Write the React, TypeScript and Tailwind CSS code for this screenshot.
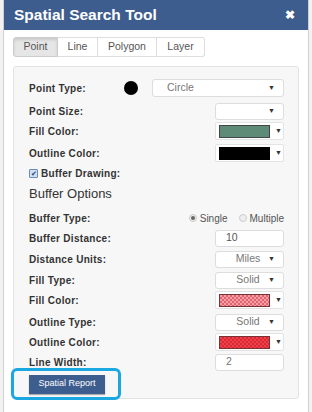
import React from "react";

const font = { fontFamily: "'Liberation Sans', Arial, sans-serif" };

function Caret({ className = "" }: { className?: string }) {
  return <span className={`text-[7px] text-[#333] ${className}`}>▼</span>;
}

function Select({ value, className = "", left = false }: { value?: string; className?: string; left?: boolean }) {
  return (
    <div
      className={`h-[17px] bg-white border border-[#ddd] rounded-[3px] flex items-center justify-between pl-3 pr-2 text-[10.5px] text-[#777] ${className}`}
    >
      <span className={`flex-1 ${left ? "text-left pl-[2px]" : "text-center"}`}>{value}</span>
      <Caret />
    </div>
  );
}

function Swatch({ swatch }: { swatch: React.ReactNode }) {
  return (
    <div className="w-[69px] h-[18px] bg-white border border-[#e3e3e3] rounded-[2px] flex items-center pl-[3px] gap-[5px]">
      {swatch}
      <Caret />
    </div>
  );
}

function Row({ label, children }: { label: string; children?: React.ReactNode }) {
  return (
    <div className="flex items-center justify-between h-[20px]">
      <span className="text-[10px] font-bold text-[#333] tracking-[0.3px]">{label}</span>
      {children}
    </div>
  );
}

const checker = {
  backgroundColor: "#f4a0a6",
  backgroundImage:
    "linear-gradient(45deg,#e06470 25%,transparent 25%,transparent 75%,#e06470 75%),linear-gradient(45deg,#e06470 25%,transparent 25%,transparent 75%,#e06470 75%)",
  backgroundSize: "4px 4px",
  backgroundPosition: "0 0,2px 2px",
};

const checkerRed = {
  backgroundColor: "#f0404a",
  backgroundImage:
    "linear-gradient(45deg,#d82a34 25%,transparent 25%,transparent 75%,#d82a34 75%),linear-gradient(45deg,#d82a34 25%,transparent 25%,transparent 75%,#d82a34 75%)",
  backgroundSize: "4px 4px",
  backgroundPosition: "0 0,2px 2px",
};

export default function App() {
  return (
    <div className="w-[312px] h-[412px] bg-[#f2f2f2] overflow-hidden" style={font}>
      <div className="mx-[3px] h-[412px] bg-white border-x border-[#d0d0d0] flex flex-col">
        {/* Header */}
        <div className="h-[30px] bg-[#3d5d8f] flex items-center justify-between pl-[10px] pr-[13px] shrink-0">
          <span className="text-white font-bold text-[15.5px]">Spatial Search Tool</span>
          <span className="text-white font-bold text-[12px] leading-none">✖</span>
        </div>

        {/* Tabs */}
        <div className="flex mt-[7px] ml-[9px] text-[10.5px] text-[#555]">
          <div className="h-[20px] w-[45px] flex items-center justify-center bg-[#e6e6e6] border border-[#ccc] rounded-l-[3px] shadow-[inset_0_2px_3px_rgba(0,0,0,0.12)]">
            Point
          </div>
          <div className="h-[20px] w-[40px] flex items-center justify-center border-y border-r border-[#ddd]">Line</div>
          <div className="h-[20px] w-[59px] flex items-center justify-center border-y border-r border-[#ddd]">Polygon</div>
          <div className="h-[20px] w-[48px] flex items-center justify-center border-y border-r border-[#ddd] rounded-r-[3px]">Layer</div>
        </div>

        {/* Panel */}
        <div className="mt-[9px] mx-[9px] h-[333px] bg-[#f7f7f7] border border-[#e3e3e3] rounded-[3px] pl-[15px] pr-[14px] pt-[11px]">
          <Row label="Point Type:">
            <div className="flex items-center gap-[14px]">
              <span className="w-[14px] h-[14px] rounded-full bg-black" />
              <Select value="Circle" left className="w-[132px] h-[18px]" />
            </div>
          </Row>
          <div className="h-[3px]" />
          <Row label="Point Size:">
            <Select className="w-[69px]" />
          </Row>
          <Row label="Fill Color:">
            <Swatch swatch={<span className="w-[51px] h-[13px] bg-[#5e8a78] border border-[#444]" />} />
          </Row>
          <div className="h-[2px]" />
          <Row label="Outline Color:">
            <Swatch swatch={<span className="w-[51px] h-[13px] bg-black" />} />
          </Row>
          <div className="flex items-center gap-[3px] h-[20px]">
            <span className="w-[9px] h-[9px] bg-[#cfe0f5] border border-[#6b8cba] rounded-[1px] flex items-center justify-center text-[7px] leading-none text-[#1f3e6e]">
              ✔
            </span>
            <span className="text-[10px] font-bold text-[#333] tracking-[0.3px]">Buffer Drawing:</span>
          </div>
          <div className="h-[22px] flex items-center text-[13px] text-[#333]">Buffer Options</div>
          <div className="h-[3px]" />
          <Row label="Buffer Type:">
            <div className="flex items-center text-[10px] text-[#555] gap-[3px]">
              <span className="w-[8px] h-[8px] rounded-full bg-[#eee] border border-[#ccc] flex items-center justify-center">
                <span className="w-[4px] h-[4px] rounded-full bg-[#666]" />
              </span>
              <span>Single</span>
              <span className="ml-[8px] w-[8px] h-[8px] rounded-full bg-[#eee] border border-[#ccc]" />
              <span>Multiple</span>
            </div>
          </Row>
          <Row label="Buffer Distance:">
            <div className="w-[69px] h-[17px] bg-white border border-[#ddd] rounded-[3px] text-[10.5px] text-[#555] pl-[10px] flex items-center">10</div>
          </Row>
          <div className="h-[1px]" />
          <Row label="Distance Units:">
            <Select value="Miles" className="w-[69px]" />
          </Row>
          <div className="h-[1px]" />
          <Row label="Fill Type:">
            <Select value="Solid" className="w-[69px]" />
          </Row>
          <Row label="Fill Color:">
            <Swatch swatch={<span className="w-[51px] h-[13px] border border-[#733]" style={checker} />} />
          </Row>
          <div className="h-[2px]" />
          <Row label="Outline Type:">
            <Select value="Solid" className="w-[69px]" />
          </Row>
          <Row label="Outline Color:">
            <Swatch swatch={<span className="w-[51px] h-[13px] border border-[#733]" style={checkerRed} />} />
          </Row>
          <Row label="Line Width:">
            <div className="w-[69px] h-[17px] bg-white border border-[#ddd] rounded-[3px] text-[10.5px] text-[#777] pl-[10px] flex items-center">2</div>
          </Row>
          <div className="-mt-[4px] -ml-[18px] w-[110px] h-[32px] border-[3px] border-[#1ba8e2] rounded-[6px] flex items-center pl-[15px]">
            <div className="h-[19px] w-[76px] bg-[#3d5d8f] text-white text-[9px] flex items-center justify-center shadow-[0_1px_1px_rgba(0,0,0,0.3)]">
              Spatial Report
            </div>
          </div>
        </div>
      </div>
    </div>
  );
}
